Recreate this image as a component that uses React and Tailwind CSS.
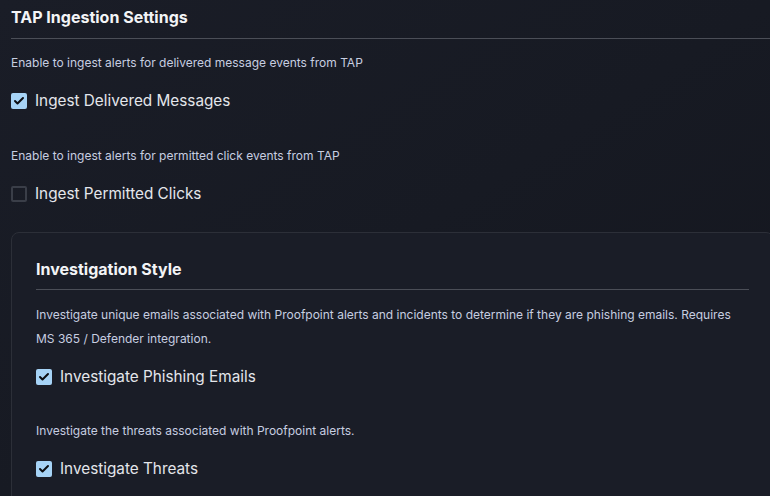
import { Check } from 'lucide-react';

const font = { fontFamily: 'Inter, "Noto Sans", sans-serif' };

function Checkbox({ checked, label }) {
  return (
    <label className="flex items-center gap-[8px] leading-6 text-[15.3px] text-[#e4e6eb]">
      {checked ? (
        <span className="w-4 h-4 rounded-[2px] bg-[#a6d3f6] flex items-center justify-center">
          <Check size={12} strokeWidth={4} className="text-[#0b0d12]" />
        </span>
      ) : (
        <span className="w-4 h-4 rounded-[2px] border-2 border-[#3a3e48]" />
      )}
      {label}
    </label>
  );
}

function Setting({ desc, checked, label }) {
  return (
    <div>
      <p className="text-xs leading-6 text-[#c7cee0]">{desc}</p>
      <div className="mt-[14px]">
        <Checkbox checked={checked} label={label} />
      </div>
    </div>
  );
}

export default function App() {
  return (
    <div
      className="w-[770px] h-[496px] overflow-hidden bg-gradient-to-br from-[#1a1d27] via-[#171a23] to-[#14161e]"
      style={font}
    >
      <div className="w-[763px] ml-[11px] pt-[5px]">
        <h2 className="text-base leading-6 font-bold text-[#f3f4f6] pb-[9px] border-b border-[#4b4e57]">
          TAP Ingestion Settings
        </h2>

        <div className="mt-[12px] flex flex-col gap-[31px]">
          <Setting
            desc="Enable to ingest alerts for delivered message events from TAP"
            checked
            label="Ingest Delivered Messages"
          />
          <Setting
            desc="Enable to ingest alerts for permitted click events from TAP"
            checked={false}
            label="Ingest Permitted Clicks"
          />
        </div>

        <div className="mt-[26px] rounded-lg border border-[#2c2f38] bg-[#1a1d27] p-6">
          <h3 className="text-base leading-6 font-bold text-[#f3f4f6] pb-[8px] border-b border-[#4b4e57]">
            Investigation Style
          </h3>
          <div className="mt-[13px] flex flex-col gap-[30px]">
            <Setting
              desc="Investigate unique emails associated with Proofpoint alerts and incidents to determine if they are phishing emails. Requires MS 365 / Defender integration."
              checked
              label="Investigate Phishing Emails"
            />
            <Setting
              desc="Investigate the threats associated with Proofpoint alerts."
              checked
              label="Investigate Threats"
            />
          </div>
        </div>
      </div>
    </div>
  );
}
